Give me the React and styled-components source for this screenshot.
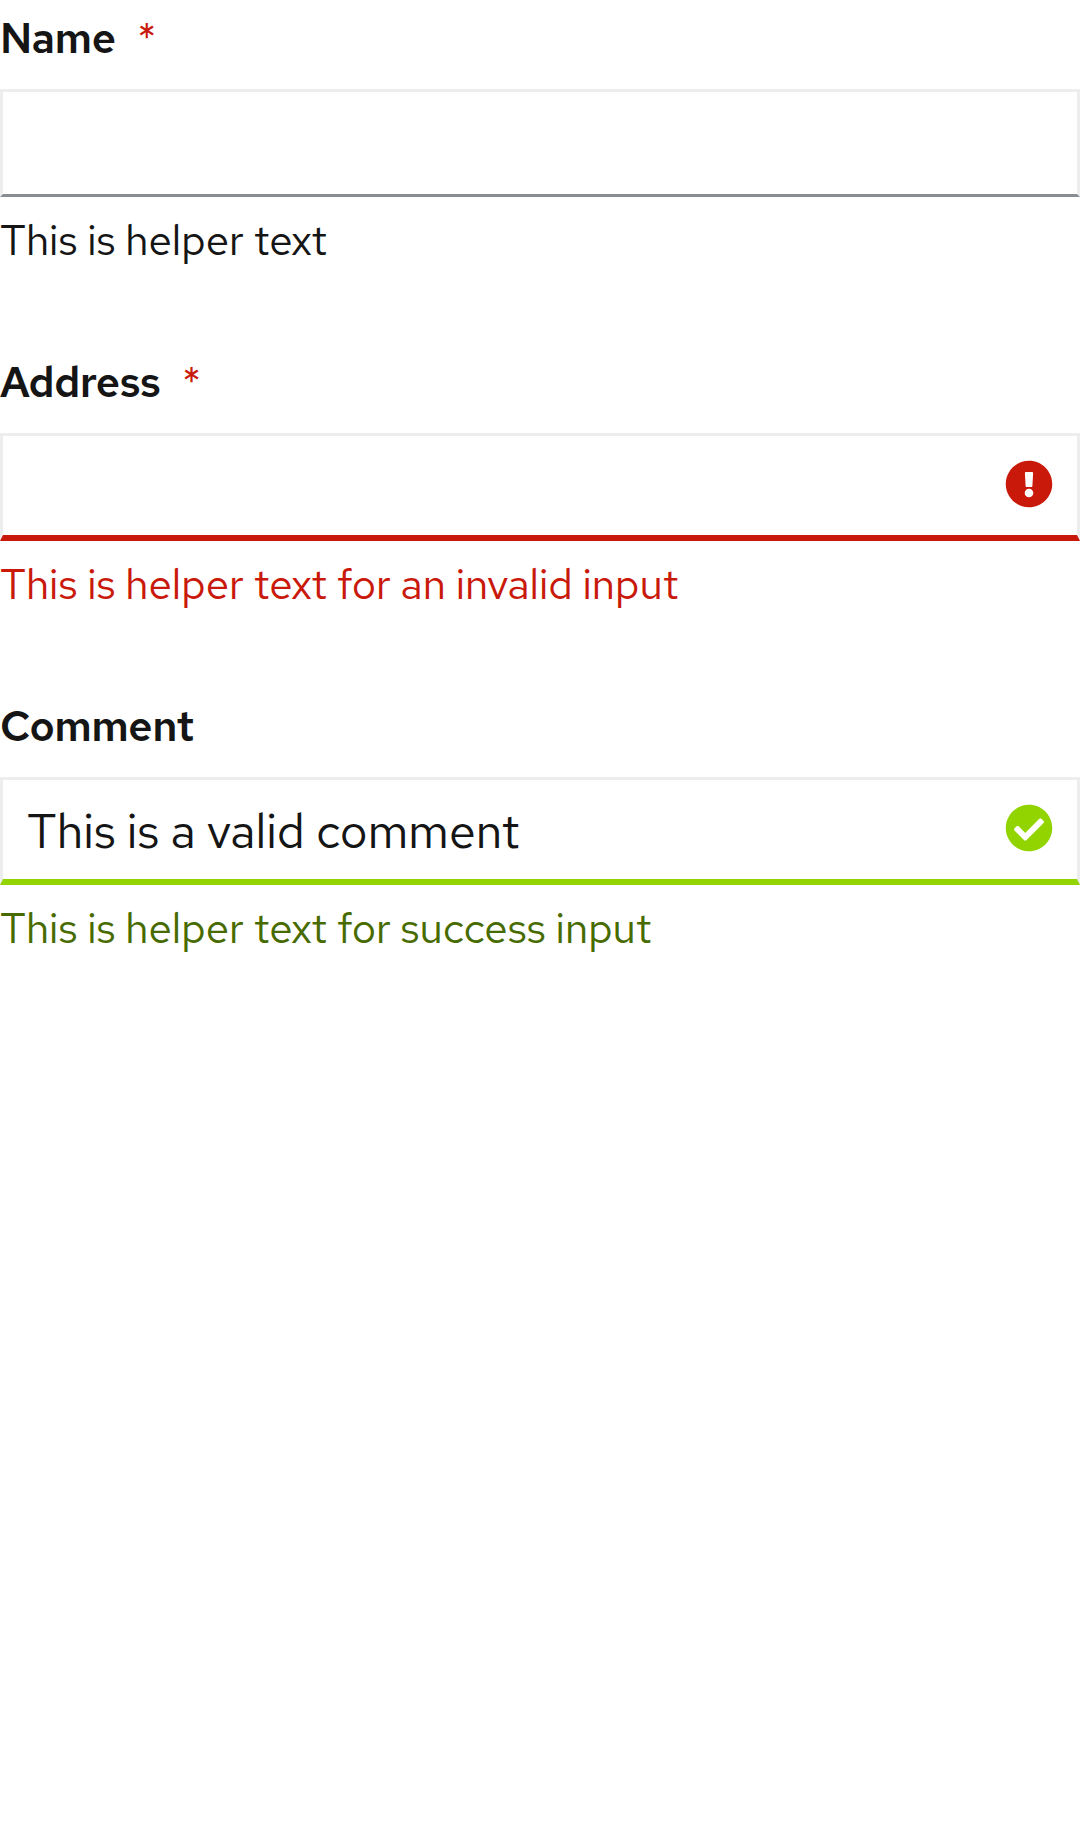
import React from 'react';
import styled, { createGlobalStyle } from 'styled-components';
import { FaExclamationCircle, FaCheckCircle } from 'react-icons/fa';

const fontStack = '"Red Hat Text", Lato, "Open Sans", sans-serif';

const Global = createGlobalStyle`
  body {
    margin: 0;
    background: #fff;
    color: #151515;
    font-family: ${fontStack};
  }
`;

const statusBorder = { default: '#8a8d90', error: '#c9190b', success: '#92d400' };
const statusText = { default: '#151515', error: '#c9190b', success: '#486b00' };

const Form = styled.form`
  display: flex;
  flex-direction: column;
  gap: 77px;
`;

const Group = styled.div`
  display: flex;
  flex-direction: column;
  padding-top: 11px;
`;

const Label = styled.label`
  height: 54px;
  margin-bottom: 24px;
  font-size: 42px;
  font-weight: 600;
  line-height: 54px;
  letter-spacing: -0.25px;
  white-space: nowrap;
`;

const Required = styled.span`
  margin-left: 21.5px;
  color: #c9190b;
  font-weight: 400;
`;

const Control = styled.div`
  box-sizing: border-box;
  display: flex;
  align-items: flex-start;
  height: 108px;
  background: #fff;
  border: 3px solid #ededed;
  border-bottom: ${p => (p.$status === 'default' ? 3 : 6)}px solid ${p => statusBorder[p.$status]};
`;

const Input = styled.input`
  flex: 1;
  min-width: 0;
  height: 100%;
  box-sizing: border-box;
  padding: 2px 24px 0;
  border: 0;
  outline: 0;
  background: transparent;
  color: #151515;
  font-family: ${fontStack};
  font-size: 48px;
  font-weight: 400;
  letter-spacing: 0.04px;
`;

const StatusIcon = styled.span`
  display: flex;
  margin: 24px 24px 0 0;
  color: ${p => statusBorder[p.$status]};
  font-size: 48px;
`;

const HelperText = styled.div`
  margin-top: 16px;
  color: ${p => statusText[p.$status]};
  font-size: 42px;
  font-weight: 400;
  line-height: 54px;
  white-space: nowrap;
`;

const icons = { error: FaExclamationCircle, success: FaCheckCircle };

function Field({ id, label, required, status = 'default', value = '', helper }) {
  const Icon = icons[status];
  return (
    <Group>
      <Label htmlFor={id}>
        {label}
        {required && <Required>*</Required>}
      </Label>
      <Control $status={status}>
        <Input id={id} type="text" defaultValue={value} />
        {Icon && <StatusIcon $status={status}><Icon /></StatusIcon>}
      </Control>
      <HelperText $status={status}>{helper}</HelperText>
    </Group>
  );
}

export default function App() {
  return (
    <>
      <Global />
      <Form>
        <Field id="name" label="Name" required helper="This is helper text" />
        <Field id="address" label="Address" required status="error" helper="This is helper text for an invalid input" />
        <Field
          id="comment"
          label="Comment"
          status="success"
          value="This is a valid comment"
          helper="This is helper text for success input"
        />
      </Form>
    </>
  );
}
